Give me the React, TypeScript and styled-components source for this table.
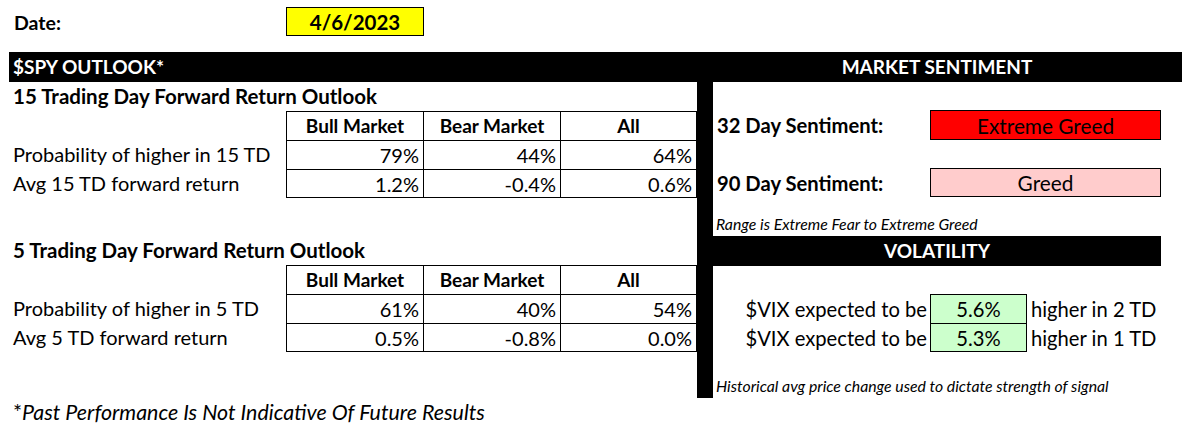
import React from "react";
import styled, { createGlobalStyle } from "styled-components";

const Global = createGlobalStyle`
  html, body { margin: 0; padding: 0; background: #ffffff; }
  body { font-family: Lato, "Noto Sans", sans-serif; color: #000000; }
  #root { width: 1182px; height: 436px; }
`;

const Sheet = styled.div`
  width: 1182px;
  height: 436px;
  padding-left: 9px;
  box-sizing: border-box;
  overflow: hidden;
`;

const DateRow = styled.div`
  height: 52px;
  display: grid;
  grid-template-columns: 277px 138px;
  align-items: start;
`;

const DateLabel = styled.div`
  margin-top: 8px;
  padding-left: 5px;
  height: 29px;
  line-height: 29px;
  font-size: 19.5px;
  font-weight: 700;
`;

const DateBox = styled.div`
  margin-top: 7px;
  height: 29px;
  box-sizing: border-box;
  border: 1px solid #000;
  background: #ffff00;
  line-height: 28px;
  text-align: center;
  font-size: 20.5px;
  font-weight: 700;
`;

const HeaderBar = styled.div`
  height: 30px;
  background: #000;
  color: #fff;
  display: grid;
  grid-template-columns: 688px 16px 448px;
  line-height: 30px;
  font-size: 19px;
  font-weight: 700;
`;

const HeaderText = styled.div<{ $center?: boolean }>`
  padding-left: ${(p) => (p.$center ? "0" : "4px")};
  text-align: ${(p) => (p.$center ? "center" : "left")};
  white-space: nowrap;
`;

const Body = styled.div`
  display: grid;
  grid-template-columns: 688px 16px 448px;
`;

const LeftColumn = styled.div`
  display: flex;
  flex-direction: column;
`;

const Divider = styled.div`
  background: #000;
`;

const RightColumn = styled.div`
  display: flex;
  flex-direction: column;
`;

const SectionTitle = styled.div<{ $gap?: number }>`
  margin-top: ${(p) => p.$gap ?? 0}px;
  height: 29px;
  line-height: 28px;
  padding-left: 4px;
  font-size: 20.5px;
  font-weight: 700;
  white-space: nowrap;
`;

const TableWrap = styled.div`
  display: flex;
`;

const LabelStack = styled.div`
  width: 277px;
  display: grid;
  grid-template-rows: 29px 29px 29px;
`;

const RowLabel = styled.div`
  padding-left: 4px;
  line-height: 29px;
  font-size: 20px;
  white-space: nowrap;
`;

const ValueGrid = styled.div`
  display: grid;
  grid-template-columns: 136px 136px 135px;
  grid-template-rows: 28px 28px 27px;
  gap: 1px;
  padding: 1px;
  background: #000;
`;

const Cell = styled.div<{ $head?: boolean }>`
  background: #fff;
  line-height: 28px;
  font-size: ${(p) => (p.$head ? "19px" : "20px")};
  font-weight: ${(p) => (p.$head ? 700 : 400)};
  text-align: ${(p) => (p.$head ? "center" : "right")};
  padding-right: ${(p) => (p.$head ? "0" : "4px")};
  white-space: nowrap;
`;

const Spacer = styled.div<{ $h: number }>`
  height: ${(p) => p.$h}px;
`;

const SentRow = styled.div<{ $h: number }>`
  height: ${(p) => p.$h}px;
  display: grid;
  grid-template-columns: 217px 231px;
`;

const SentLabel = styled.div`
  padding-left: 4px;
  align-self: center;
  font-size: 20.2px;
  font-weight: 700;
  white-space: nowrap;
`;

const SentBox = styled.div<{ $bg: string }>`
  background: ${(p) => p.$bg};
  border: 1px solid #000;
  display: flex;
  align-items: center;
  justify-content: center;
  font-size: 20.8px;
`;

const Note = styled.div<{ $h: number }>`
  height: ${(p) => p.$h}px;
  display: flex;
  align-items: flex-end;
  padding-left: 3px;
  padding-bottom: 3px;
  box-sizing: border-box;
  font-size: 15.8px;
  font-style: italic;
  white-space: nowrap;
`;

const SubBar = styled.div`
  height: 30px;
  background: #000;
  color: #fff;
  line-height: 30px;
  text-align: center;
  font-size: 19px;
  font-weight: 700;
`;

const VixGrid = styled.div`
  display: grid;
  grid-template-columns: 217px 97px 134px;
  grid-template-rows: 30px 28px;
  font-size: 20.2px;
`;

const VixLabel = styled.div`
  text-align: right;
  padding-right: 3px;
  align-self: center;
  white-space: nowrap;
`;

const VixBox = styled.div<{ $first?: boolean }>`
  background: #ccffcc;
  border: 1px solid #000;
  border-top: ${(p) => (p.$first ? "1px solid #000" : "none")};
  display: flex;
  align-items: center;
  justify-content: center;
`;

const VixAfter = styled.div`
  padding-left: 4px;
  align-self: center;
  white-space: nowrap;
`;

const Footer = styled.div`
  height: 29px;
  line-height: 29px;
  padding-left: 4px;
  font-size: 21.4px;
  white-space: nowrap;
`;

const Italic = styled.span`
  font-style: italic;
`;

type Outlook = {
  title: string;
  rows: { label: string; values: string[] }[];
};

const outlooks: Outlook[] = [
  {
    title: "15 Trading Day Forward Return Outlook",
    rows: [
      { label: "Probability of higher in 15 TD", values: ["79%", "44%", "64%"] },
      { label: "Avg 15 TD forward return", values: ["1.2%", "-0.4%", "0.6%"] },
    ],
  },
  {
    title: "5 Trading Day Forward Return Outlook",
    rows: [
      { label: "Probability of higher in 5 TD", values: ["61%", "40%", "54%"] },
      { label: "Avg 5 TD forward return", values: ["0.5%", "-0.8%", "0.0%"] },
    ],
  },
];

const heads = ["Bull Market", "Bear Market", "All"];

function OutlookTable({ data, gap }: { data: Outlook; gap?: number }) {
  return (
    <>
      <SectionTitle $gap={gap}>{data.title}</SectionTitle>
      <TableWrap>
        <LabelStack>
          <RowLabel />
          {data.rows.map((r) => (
            <RowLabel key={r.label}>{r.label}</RowLabel>
          ))}
        </LabelStack>
        <ValueGrid>
          {heads.map((h) => (
            <Cell $head key={h}>
              {h}
            </Cell>
          ))}
          {data.rows.map((r) =>
            r.values.map((v, i) => <Cell key={r.label + i}>{v}</Cell>)
          )}
        </ValueGrid>
      </TableWrap>
    </>
  );
}

export default function App() {
  return (
    <>
      <Global />
      <Sheet>
        <DateRow>
          <DateLabel>Date:</DateLabel>
          <DateBox>4/6/2023</DateBox>
        </DateRow>
        <HeaderBar>
          <HeaderText>$SPY OUTLOOK*</HeaderText>
          <div />
          <HeaderText $center>MARKET SENTIMENT</HeaderText>
        </HeaderBar>
        <Body>
          <LeftColumn>
            <OutlookTable data={outlooks[0]} />
            <OutlookTable data={outlooks[1]} gap={38} />
          </LeftColumn>
          <Divider />
          <RightColumn>
            <Spacer $h={28} />
            <SentRow $h={30}>
              <SentLabel>32 Day Sentiment:</SentLabel>
              <SentBox $bg="#ff0000">Extreme Greed</SentBox>
            </SentRow>
            <Spacer $h={28} />
            <SentRow $h={29}>
              <SentLabel>90 Day Sentiment:</SentLabel>
              <SentBox $bg="#ffcccc">Greed</SentBox>
            </SentRow>
            <Note $h={39}>Range is Extreme Fear to Extreme Greed</Note>
            <SubBar>VOLATILITY</SubBar>
            <Spacer $h={28} />
            <VixGrid>
              <VixLabel>$VIX expected to be</VixLabel>
              <VixBox $first>5.6%</VixBox>
              <VixAfter>higher in 2 TD</VixAfter>
              <VixLabel>$VIX expected to be</VixLabel>
              <VixBox>5.3%</VixBox>
              <VixAfter>higher in 1 TD</VixAfter>
            </VixGrid>
            <Note $h={46}>Historical avg price change used to dictate strength of signal</Note>
          </RightColumn>
        </Body>
        <Footer>
          *<Italic>Past Performance Is Not Indicative Of Future Results</Italic>
        </Footer>
      </Sheet>
    </>
  );
}
